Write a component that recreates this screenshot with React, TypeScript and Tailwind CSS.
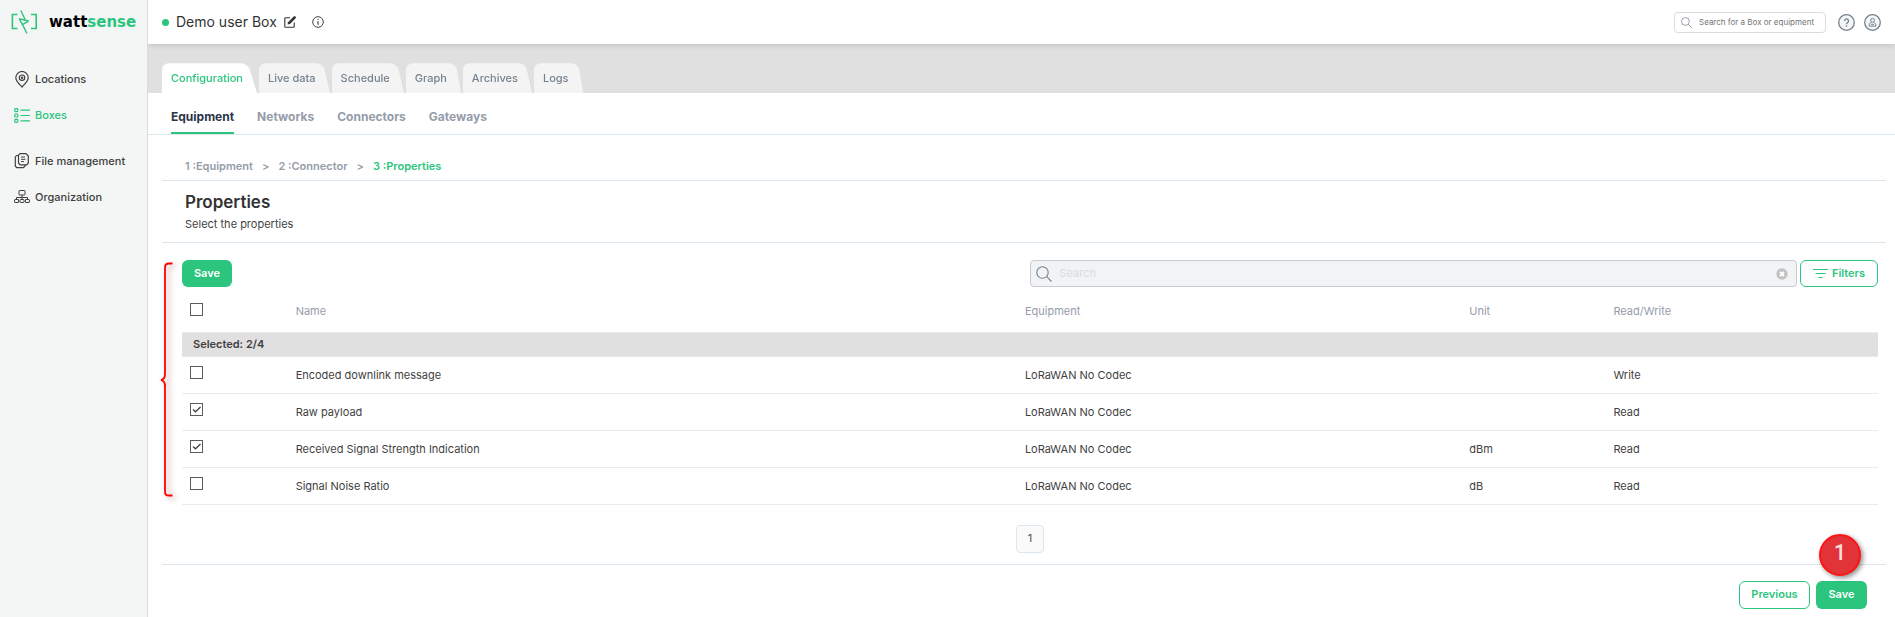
import { ReactNode, useState } from "react";

type Property = {
    id: number;
    name: string;
    equipment: string;
    unit: string;
    access: string;
};

const TABS = ["Configuration", "Live data", "Schedule", "Graph", "Archives", "Logs"];
const SUB_TABS = ["Equipment", "Networks", "Connectors", "Gateways"];
const STEPS = ["1 :Equipment", "2 :Connector", "3 :Properties"];

const PROPERTIES: Property[] = [
    { id: 1, name: "Encoded downlink message", equipment: "LoRaWAN No Codec", unit: "", access: "Write" },
    { id: 2, name: "Raw payload", equipment: "LoRaWAN No Codec", unit: "", access: "Read" },
    { id: 3, name: "Received Signal Strength Indication", equipment: "LoRaWAN No Codec", unit: "dBm", access: "Read" },
    { id: 4, name: "Signal Noise Ratio", equipment: "LoRaWAN No Codec", unit: "dB", access: "Read" },
];

const Logo = () => (
    <a href="#home" className="flex items-center gap-[11px] pl-[11px] pt-[9px]">
        <svg width="27" height="26" viewBox="0 0 27 26" fill="none" stroke="#2bc57d" strokeWidth="1.6">
            <path d="M6.500 5.500H1.400v14h5.100M20 5.500h5.200v14H20" />
            <path d="M9.800 1.500L14.200 10.800M8 9.700L17.800 12M8.200 9.700L11.400 15.600L17.600 12.200M11.400 15.400L16 24.500" strokeWidth="1.400" strokeLinejoin="round" />
        </svg>
        <span className="font-['DejaVu_Sans',sans-serif] text-[15px] leading-5 font-bold text-black">
            watt<span className="text-[#2bc57d]">sense</span>
        </span>
    </a>
);

const PinIcon = () => (
    <svg width="16" height="17" viewBox="0 0 16 17" fill="none" stroke="currentColor" strokeWidth="1.2">
        <path d="M8 16C5 12.800 1.800 10 1.800 6.700a6.200 6.200 0 0 1 12.400 0C14.200 10 11 12.800 8 16z" />
        <circle cx="8" cy="6.700" r="2.700" />
        <circle cx="8" cy="6.700" r="0.600" />
    </svg>
);

const BoxesIcon = () => (
    <svg width="16" height="17" viewBox="0 0 16 17" fill="none" stroke="currentColor" strokeWidth="1.200">
        <rect x="0.800" y="1.600" width="3" height="3" rx="0.800" />
        <rect x="0.800" y="7" width="3" height="3" rx="0.800" />
        <rect x="0.800" y="12.400" width="3" height="3" rx="0.800" />
        <path d="M6.500 3.100H16M6.500 8.500H16M6.500 13.900H16" />
    </svg>
);

const FilesIcon = () => (
    <svg width="16" height="17" viewBox="0 0 16 17" fill="none" stroke="currentColor" strokeWidth="1.200" strokeLinejoin="round">
        <path d="M4.500 2.200L6 .7h6L14.300 3v7l-1.500 1.800H6L4.500 10z" />
        <path d="M4.500 2.500H2.500L1.300 4v9l1.400 1.600h6.800l1.500-1.600v-1.200" />
        <path d="M7 4h4M7 6.300h4.500M7 8.600h3" strokeWidth="1" />
    </svg>
);

const OrgIcon = () => (
    <svg width="16" height="17" viewBox="0 0 16 17" fill="none" stroke="currentColor" strokeWidth="1">
        <rect x="5" y="1.500" width="6" height="4.500" rx="0.500" />
        <path d="M8 6v5M2.500 10.500V8.500h11v2" />
        <rect x="0.600" y="10.500" width="4" height="3" rx="0.500" />
        <rect x="6" y="10.500" width="4" height="3" rx="0.500" />
        <rect x="11.400" y="10.500" width="4" height="3" rx="0.500" />
    </svg>
);

const SearchIcon = ({ size }: { size: number }) => (
    <svg width={size} height={size} viewBox="0 0 16 16" fill="none" stroke="#76828f" strokeWidth="1.100">
        <circle cx="6.500" cy="6.500" r="5.700" />
        <path d="M10.700 10.700L15.500 15.500" />
    </svg>
);

const NavItem = ({ icon, label, active }: { icon: ReactNode; label: string; active?: boolean }) => (
    <a
        href="#nav"
        className={`flex h-9 items-center gap-[5px] pl-[14px] text-[11px] font-medium ${active ? "text-[#2bc57d]" : "text-[#3f3f3f]"}`}
    >
        {icon}
        {label}
    </a>
);

const Sidebar = () => (
    <aside className="w-[148px] shrink-0 border-r border-[#d9dddc] bg-[#f4f6f5]">
        <Logo />
        <nav className="mt-[26px]">
            <NavItem icon={<PinIcon />} label="Locations" />
            <NavItem icon={<BoxesIcon />} label="Boxes" active />
            <div className="mt-[10px]">
                <NavItem icon={<FilesIcon />} label="File management" />
                <NavItem icon={<OrgIcon />} label="Organization" />
            </div>
        </nav>
    </aside>
);

const Header = () => (
    <header className="relative flex h-11 items-center bg-white px-[14px] shadow-[0_1px_6px_rgba(0,0,0,0.15)]">
        <span className="size-[7px] rounded-full bg-[#2bc57d]" />
        <h1 className="ml-[7px] text-[14px] leading-5 text-[#333333]">Demo user Box</h1>
        <button aria-label="Rename" className="ml-[7px]">
            <svg width="12" height="12" viewBox="0 0 12 12">
                <path d="M6 1.800H1.600a.8.8 0 0 0-.8.8v7.800a.8.8 0 0 0 .8.8h7.800a.8.8 0 0 0 .8-.8V6.500" fill="none" stroke="#333333" strokeWidth="1.100" />
                <path d="M3.600 8.600l.4-2.400L9.200 1l.8-.8h1.200l.7.700v1L6 8z" fill="#333333" />
            </svg>
        </button>
        <button aria-label="Information" className="ml-4">
            <svg width="12" height="12" viewBox="0 0 12 12" fill="none" stroke="#444444">
                <circle cx="6" cy="6" r="5.300" strokeWidth="1" />
                <path d="M6 5.200v3.600M6 3v1.100" strokeWidth="1.200" />
            </svg>
        </button>
        <label className="ml-auto flex h-[21px] w-[152px] items-center gap-[7px] rounded border border-[#dcdcdc] pl-[6px]">
            <SearchIcon size={11} />
            <input
                aria-label="Search for a Box or equipment"
                placeholder="Search for a Box or equipment"
                className="w-0 flex-1 text-[8px] outline-none placeholder:text-[#757575]"
            />
        </label>
        <button aria-label="Help" className="ml-3">
            <svg width="17" height="17" viewBox="0 0 17 17" fill="none" stroke="#76828f">
                <circle cx="8.500" cy="8.500" r="7.800" fill="#f4f6f7" strokeWidth="1.300" />
                <path d="M6.500 7a2 2 0 1 1 3.200 1.500c-.8.600-1.200.8-1.200 1.700" strokeWidth="1.300" />
                <path d="M8.500 11.300v1.400" strokeWidth="1.400" />
            </svg>
        </button>
        <button aria-label="Account" className="ml-[9px]">
            <svg width="17" height="17" viewBox="0 0 17 17" fill="none" stroke="#76828f">
                <circle cx="8.500" cy="8.500" r="7.800" fill="#f4f6f7" strokeWidth="1.300" />
                <circle cx="8.500" cy="6.300" r="1.900" strokeWidth="1" />
                <path d="M7.300 8.200c-1.300.5-2.200 1.700-2.200 3.900h6.800c0-2.200-.9-3.400-2.200-3.900" strokeWidth="1" />
                <path d="M7 10.300h3" strokeWidth="1" />
            </svg>
        </button>
    </header>
);

// The tab shape is tilted away from the viewer so that its right edge slants
const Tabs = () => (
    <nav className="flex gap-[2px] bg-[#e0e0e0] pl-[14px] pt-[19px]">
        {TABS.map((tab, i) => (
            <button
                key={tab}
                className={`relative isolate h-[30px] pl-[9px] pr-[14px] text-[11px] font-medium after:absolute after:bottom-0 after:left-0 after:-z-10 after:h-[33px] after:w-full after:origin-bottom-left after:rounded-t-lg after:[transform:perspective(5px)_rotateX(0.93deg)] ${i === 0 ? "text-[#2bc57d] after:bg-white" : "text-[#76828f] after:bg-[#f4f4f4]"}`}
            >
                {tab}
            </button>
        ))}
    </nav>
);

const SubTabs = () => (
    <nav className="flex h-[42px] gap-[23px] border-b border-[#dce6ee] pl-[23px] text-[12px] font-bold">
        {SUB_TABS.map((tab, i) => (
            <a
                key={tab}
                href="#section"
                className={`flex items-center border-b-2 pt-2 ${i === 0 ? "border-[#2bc57d] text-[#2a3547]" : "border-transparent text-[#959ca9]"}`}
            >
                {tab}
            </a>
        ))}
    </nav>
);

const Breadcrumb = () => (
    <ol className="flex gap-[9px] pl-[23px] pt-[23px] pb-[6px] text-[11px] leading-4 font-semibold text-[#959ca9]">
        {STEPS.map((step, i) => (
            <li key={step} className={`flex gap-[9px] ${i === STEPS.length - 1 ? "text-[#2bc57d]" : ""}`}>
                {step}
                {i < STEPS.length - 1 && <span>&gt;</span>}
            </li>
        ))}
    </ol>
);

const Checkbox = ({ label, checked, onChange }: { label: string; checked: boolean; onChange: () => void }) => (
    <label className="grid size-[13px]">
        <input
            type="checkbox"
            aria-label={label}
            checked={checked}
            onChange={onChange}
            className="size-[13px] appearance-none border border-[#5c5c5c] bg-white [grid-area:1/1]"
        />
        {checked && (
            <svg width="13" height="13" viewBox="0 0 13 13" fill="none" stroke="#444444" className="pointer-events-none [grid-area:1/1]">
                <path d="M3 6.500l2.500 2.300L10.500 4" strokeWidth="1.300" />
            </svg>
        )}
    </label>
);

const PropertyTable = () => {
    const [selected, setSelected] = useState<number[]>([2, 3]);
    const allSelected = selected.length === PROPERTIES.length;

    const toggle = (id: number) => {
        setSelected(selected.includes(id) ? selected.filter(s => s !== id) : [...selected, id]);
    };

    const toggleAll = () => {
        setSelected(allSelected ? [] : PROPERTIES.map(p => p.id));
    };

    return (
        <table className="w-full table-fixed text-left text-[11px] leading-4 text-[#3f3f3f]">
            <colgroup>
                <col className="w-[6.7%]" />
                <col className="w-[43%]" />
                <col className="w-[26.2%]" />
                <col className="w-[8.5%]" />
                <col />
            </colgroup>
            <thead className="text-[#959ca9]">
                <tr className="h-[45px] border-b border-[#ebebeb]">
                    <th className="pl-2">
                        <Checkbox label="Select all" checked={allSelected} onChange={toggleAll} />
                    </th>
                    <th className="pt-1 font-normal">Name</th>
                    <th className="pt-1 font-normal">Equipment</th>
                    <th className="pt-1 font-normal">Unit</th>
                    <th className="pt-1 font-normal">Read/Write</th>
                </tr>
            </thead>
            <tbody>
                <tr className="h-6 border-b border-[#ebebeb] bg-[#e0e0e0]">
                    <td colSpan={5} className="pl-[11px] font-semibold">
                        Selected: {selected.length}/{PROPERTIES.length}
                    </td>
                </tr>
                {PROPERTIES.map(p => (
                    <tr key={p.id} className="h-[37px] border-b border-[#ebebeb]">
                        <td className="pl-2 pb-1">
                            <Checkbox label={p.name} checked={selected.includes(p.id)} onChange={() => toggle(p.id)} />
                        </td>
                        <td>{p.name}</td>
                        <td>{p.equipment}</td>
                        <td>{p.unit}</td>
                        <td>{p.access}</td>
                    </tr>
                ))}
            </tbody>
        </table>
    );
};

const Toolbar = () => (
    <div className="flex h-[27px] items-stretch">
        <button className="w-[50px] rounded-md bg-[#2bc57d] text-[11px] font-semibold text-white">Save</button>
        <label className="ml-auto flex w-[45.2%] items-center gap-[7px] rounded border border-[#c6cad1] bg-[#f1f3f5] pl-[5px] pr-2">
            <SearchIcon size={16} />
            <input
                aria-label="Search"
                placeholder="Search"
                className="flex-1 text-[11px] outline-none placeholder:text-[#dadce0]"
            />
            <button aria-label="Clear search">
                <svg width="12" height="12" viewBox="0 0 12 12">
                    <circle cx="6" cy="6" r="5.700" fill="#c2c2c2" />
                    <path d="M4 4l4 4M8 4l-4 4" stroke="white" strokeWidth="1.800" />
                </svg>
            </button>
        </label>
        <button className="ml-[3px] flex w-[78px] items-center justify-center gap-1 rounded-md border border-[#2bc57d] text-[11px] font-semibold text-[#2bc57d]">
            <svg width="15" height="11" viewBox="0 0 15 11" stroke="currentColor" strokeWidth="1.200">
                <path d="M0 1.500h15M2.500 5.500h10M5.500 9.500h4" />
            </svg>
            Filters
        </button>
    </div>
);

// Red brace that marks the selectable rows
const Brace = () => (
    <svg
        width="16"
        height="238"
        viewBox="0 0 16 238"
        fill="none"
        stroke="#ff0000"
        strokeWidth="1.800"
        className="absolute top-[2px] -left-[23px] overflow-visible drop-shadow-[3px_2px_3px_rgba(110,0,0,0.4)]"
    >
        <path d="M13.500 1.500H10q-4 0-4 4V112q0 5-4 6q4 1 4 6V229.500q0 4 3 4H13.500" />
    </svg>
);

export default function App() {
    return (
        <div className="flex min-h-screen bg-white font-[Inter,sans-serif]">
            <Sidebar />
            <main className="min-w-0 flex-1 overflow-hidden">
                <Header />
                <Tabs />
                <SubTabs />
                <div className="pl-[14px] pr-[9px]">
                    <Breadcrumb />
                    <section className="h-[62px] border-t border-[#dce6ee] pl-[23px] pt-[10px]">
                        <h2 className="text-[17px] leading-[22px] font-semibold text-[#333333]">Properties</h2>
                        <p className="mt-[3px] text-[11px] leading-4 text-[#3f3f3f]">Select the properties</p>
                    </section>
                    <section className="border-y border-[#dce6ee] pt-[17px] pb-[11px] pl-5 pr-2">
                        <div className="relative">
                            <Brace />
                            <Toolbar />
                            <PropertyTable />
                        </div>
                        <div className="mt-5 flex justify-center">
                            <button className="size-7 rounded border border-[#dce6ee] bg-[#fafafa] text-[11px] text-[#4a4a5a]">1</button>
                        </div>
                    </section>
                    <footer className="flex justify-end gap-[6px] pt-4 pr-[19px] pb-2 text-[11px] font-semibold">
                        <button className="h-7 w-[71px] rounded-md border border-[#2bc57d] text-[#2bc57d]">Previous</button>
                        <div className="relative">
                            <button className="h-7 w-[51px] rounded-md bg-[#2bc57d] text-white">Save</button>
                            <span className="absolute bottom-[33px] left-[3px] flex size-[42px] items-center justify-center rounded-full border-2 border-[#ff1414] bg-[#e23338] pb-1 font-[Roboto,sans-serif] text-[22px] font-medium text-[#fbdcdc] shadow-[2px_2px_5px_rgba(0,0,0,0.45)]">
                                1
                            </span>
                        </div>
                    </footer>
                </div>
            </main>
        </div>
    );
}
